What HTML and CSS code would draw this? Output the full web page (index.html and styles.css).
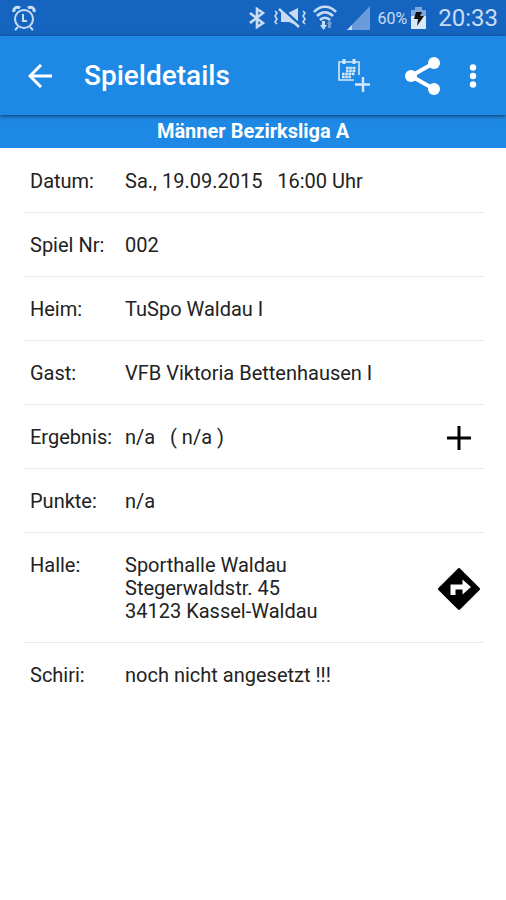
FILE: index.html
```html
<!DOCTYPE html>
<html lang="de">
<head>
<meta charset="utf-8">
<meta name="viewport" content="width=device-width, initial-scale=1">
<title>Spieldetails</title>
<link rel="stylesheet" href="styles.css">
</head>
<body>
<div class="status">
  <svg class="status-alarm" width="24" height="26" viewBox="0 0 24 26" fill="none" stroke="currentColor" stroke-width="2">
    <circle cx="12" cy="14" r="9"/>
    <path d="M11 9v7h4M6 22l-3 3M18 22l3 3"/>
    <path d="M2 7c-1-4 3-6 6-4M22 7c1-4-3-6-6-4" stroke-width="3"/>
  </svg>
  <svg width="16" height="22" viewBox="0 0 16 22" fill="none" stroke="currentColor" stroke-width="2.6">
    <path d="M1 6l13 10-6 4V2l6 4L1 16"/>
  </svg>
  <svg class="status-mute" width="34" height="22" viewBox="0 0 34 22" fill="none" stroke="currentColor" stroke-width="1.6">
    <path d="M8 6h7l10-5v18l-9-4H8z" fill="currentColor" stroke="none"/>
    <path d="M7 0l20 18" stroke="#1565c0" stroke-width="3"/>
    <path d="M6 2l20 18" stroke-width="2.4"/>
    <path d="M2 4l2 2-2 3 2 3-2 3 2 2M30 4l2 2-2 3 2 3-2 3 2 2"/>
  </svg>
  <svg class="status-wifi" width="24" height="26" viewBox="0 0 24 26" fill="none" stroke="currentColor" stroke-width="2.6">
    <path d="M1 7c6-7 16-7 22 0M4 11c5-5 11-5 16 0M7 15c3-3 7-3 10 0"/>
    <path d="M7 20h2v-4h3v4h2l-3.500 5z" fill="currentColor" stroke="none"/>
    <path d="M14 19l2.500-4 2.500 4h-1v4h-3v-4z" fill="#6d9fdc" stroke="none"/>
  </svg>
  <svg class="status-signal" width="23" height="24" viewBox="0 0 23 24">
    <path d="M23 0v24H0z" fill="#6b9bd8"/>
    <path d="M5 19v5H0z" fill="currentColor"/>
  </svg>
  <span class="status-percent">60%</span>
  <svg class="status-battery" width="15" height="22" viewBox="0 0 15 22">
    <path d="M4 0h7v3h4v7H0V3h4z" fill="#7da8dd"/>
    <path d="M0 9h15v13H0z" fill="#dce8f7"/>
    <path d="M5 5h6L9 9h4L6 19l1-7H3z" fill="#111"/>
  </svg>
  <span class="status-time">20:33</span>
</div>
<header class="toolbar">
  <button class="icon-button back" type="button" aria-label="Zurück">
    <svg width="24" height="24" viewBox="0 0 24 24" fill="none" stroke="currentColor" stroke-width="3"><path d="M24 12H3M13 1L2 12l11 11"/></svg>
  </button>
  <h1 class="title">Spieldetails</h1>
  <button class="icon-button calendar" type="button" aria-label="Zum Kalender hinzufügen">
    <svg width="34" height="34" viewBox="0 0 34 34" fill="none" stroke="#d5e8fb" stroke-width="1.600">
      <path d="M17 21H2V3h20v13"/>
      <path d="M7 0v5M17 0v5" stroke-width="3"/>
      <path d="M9 9h10M9 12h10M5 15h13M5 18h9" stroke-width="2.400" stroke-dasharray="2.600 .6"/>
      <path d="M26 18v15M18 25.500h15" stroke-width="2.400"/>
    </svg>
  </button>
  <button class="icon-button share" type="button" aria-label="Teilen">
    <svg width="36" height="38" viewBox="0 0 36 38" fill="currentColor"><path d="M29 6L6 19l23 13" fill="none" stroke="currentColor" stroke-width="4"/><circle cx="29" cy="6" r="6"/><circle cx="6" cy="19" r="6"/><circle cx="29" cy="32" r="6"/></svg>
  </button>
  <button class="icon-button more" type="button" aria-label="Weitere Optionen">
    <svg width="8" height="24" viewBox="0 0 8 24" fill="currentColor"><circle cx="4" cy="3.500" r="3.200"/><circle cx="4" cy="12" r="3.200"/><circle cx="4" cy="20.500" r="3.200"/></svg>
  </button>
</header>
<h2 class="league">Männer Bezirksliga A</h2>
<main>
  <dl class="details">
    <div class="row"><dt>Datum:</dt><dd>Sa., 19.09.2015 &nbsp; 16:00 Uhr</dd></div>
    <div class="row"><dt>Spiel Nr:</dt><dd>002</dd></div>
    <div class="row"><dt>Heim:</dt><dd>TuSpo Waldau I</dd></div>
    <div class="row"><dt>Gast:</dt><dd>VFB Viktoria Bettenhausen I</dd></div>
    <div class="row"><dt>Ergebnis:</dt><dd>n/a &nbsp; ( n/a )</dd>
      <dd class="action"><button class="icon-button" type="button" aria-label="Ergebnis eintragen">
        <svg width="24" height="24" viewBox="0 0 24 24" fill="none" stroke="currentColor" stroke-width="3"><path d="M12 0v24M0 12h24"/></svg>
      </button></dd></div>
    <div class="row"><dt>Punkte:</dt><dd>n/a</dd></div>
    <div class="row"><dt>Halle:</dt><dd>Sporthalle Waldau<br>Stegerwaldstr. 45<br>34123 Kassel-Waldau</dd>
      <dd class="action"><button class="icon-button" type="button" aria-label="Route anzeigen">
        <svg width="42" height="42" viewBox="0 0 42 42"><path d="M20 .4q1-.8 2 0L41.600 20q.8 1 0 2L22 41.600q-1 .8-2 0L.4 22q-.8-1 0-2z" fill="#000"/><path d="M12.500 27V16.500h12v-5l8.500 7.500-8.500 7.500v-5h-7V27z" fill="#fff"/></svg>
      </button></dd></div>
    <div class="row"><dt>Schiri:</dt><dd>noch nicht angesetzt !!!</dd></div>
  </dl>
</main>
</body>
</html>
```
FILE: styles.css
```css
* {
  box-sizing: border-box;
}

body {
  margin: 0;
  background: #fff;
  color: #222;
  font-family: Roboto, "Liberation Sans", sans-serif;
  font-size: 20px;
  line-height: 23px;
}

svg {
  display: block;
  flex: none;
}

.status {
  display: flex;
  align-items: center;
  height: 36px;
  padding: 0 8px 0 12px;
  background: #1565c0;
  color: #c9dcf3;
}

.status-alarm {
  margin-right: auto;
}

.status-mute,
.status-percent {
  margin-left: 8px;
}

.status-wifi {
  margin-left: 6px;
}

.status-signal {
  margin-left: 10px;
}

.status-percent {
  font-size: 16px;
}

.status-battery {
  margin: 0 12px 0 4px;
}

.status-time {
  font-size: 24px;
}

.toolbar {
  position: relative;
  display: flex;
  align-items: center;
  height: 79px;
  padding: 0 29px 0 28px;
  background: #1e88e5;
  box-shadow: 0 1px 4px rgba(0, 0, 0, .6);
  color: #fff;
}

.icon-button {
  padding: 0;
  border: 0;
  background: none;
  color: inherit;
  cursor: pointer;
}

.title {
  flex: 1;
  margin: 0 0 0 32px;
  font-size: 28px;
  font-weight: 500;
  line-height: 32px;
}

.share {
  margin: 0 28px 0 34px;
}

.league {
  margin: 0;
  padding: 5px 0;
  background: #1e88e5;
  color: #fff;
  font-size: 20px;
  font-weight: 700;
  text-align: center;
}

.details {
  margin: 0 22px 0 24px;
  padding-top: 1px;
}

.row {
  display: flex;
  align-items: flex-start;
  padding: 21px 4px 19px 6px;
  border-bottom: 1px solid #e8e8e8;
}

.row:last-child {
  border-bottom: 0;
}

dt {
  flex: none;
  width: 95px;
}

dd {
  margin: 0;
}

.action {
  display: flex;
  align-self: center;
  justify-content: center;
  width: 42px;
  margin: -10px 0 -10px auto;
  color: #000;
}
```
